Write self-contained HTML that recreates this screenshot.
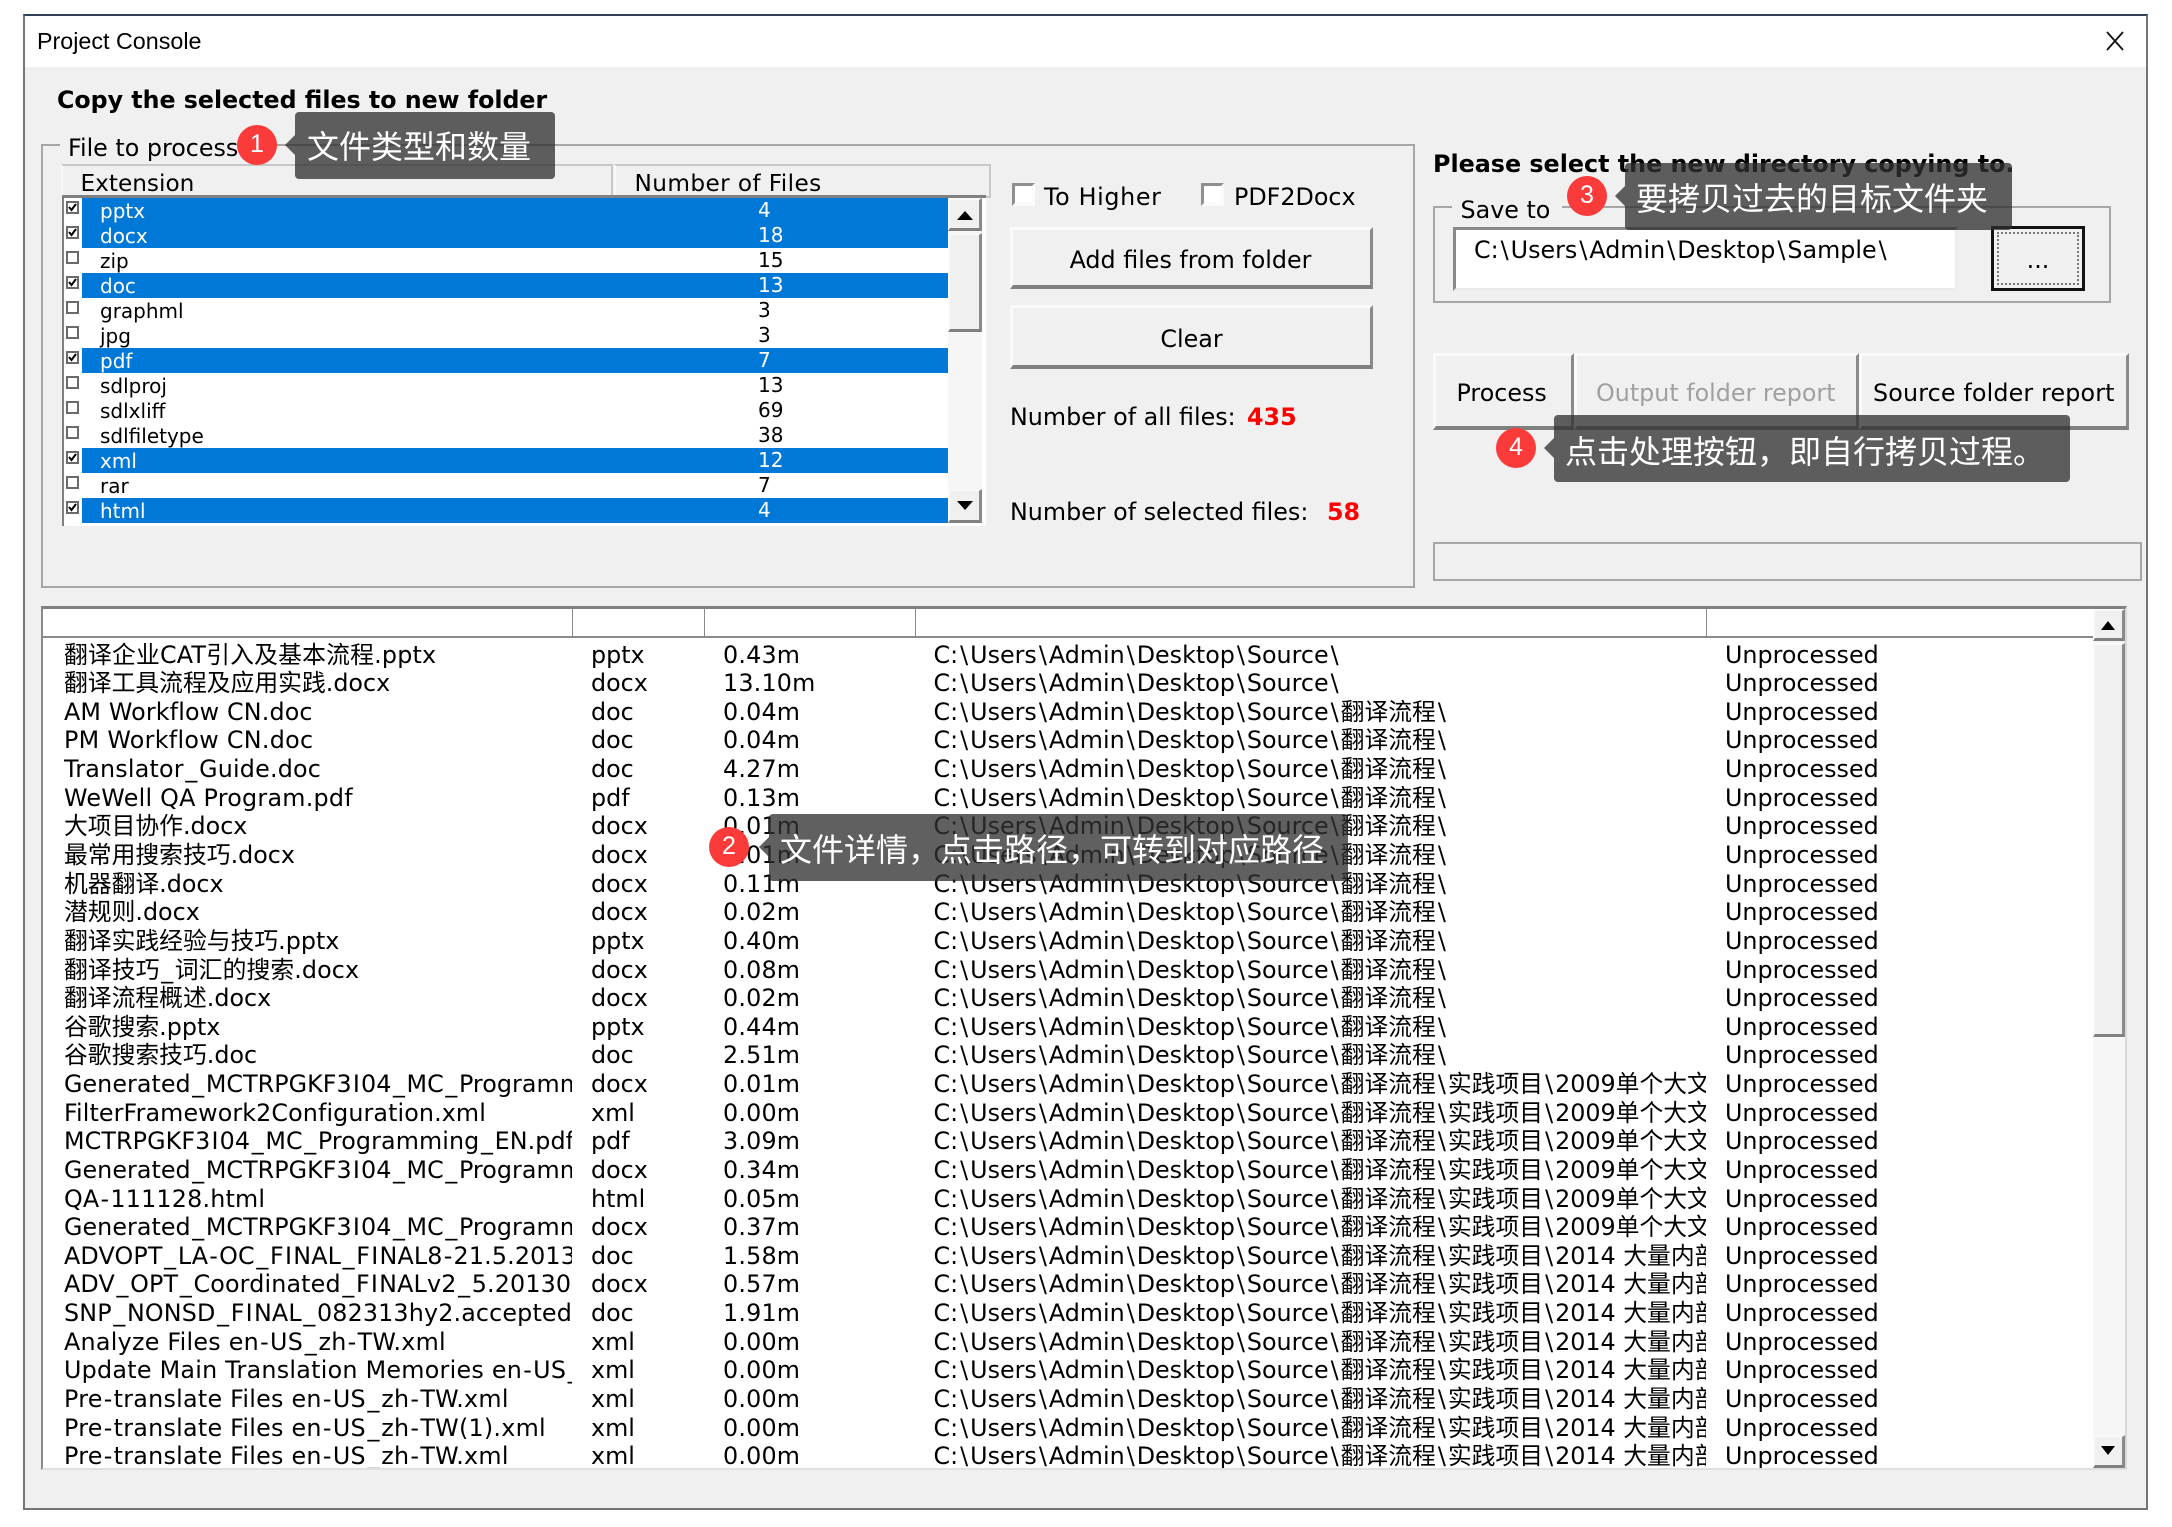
<!DOCTYPE html>
<html>
<head>
<meta charset="utf-8">
<title>Project Console</title>
<style>
html,body{margin:0;padding:0;background:#fff;}
#p{position:relative;width:2172px;height:1527px;overflow:hidden;background:#fff;font-family:"DejaVu Sans","Noto Sans CJK SC",sans-serif;font-size:23.8px;color:#000;}
#p div{position:absolute;box-sizing:border-box;}
s,u{text-decoration:none;}
s{padding:0 2px;}
u{padding:0 1.6px;}
em{font-style:normal;padding:0 1.1px;}
.t{white-space:nowrap;line-height:28px;}
.b{font-weight:bold;}
.btn{background:#f0f0f0;border:3px solid #fafafa;border-right:3px solid #8a8a8a;border-bottom:4px solid #808080;}
.frame{border:2px solid #a6a6a6;}
.leg{background:#f0f0f0;height:24px;}
.hd{background:#f0f0f0;border:2px solid #c8c8c8;border-left:2px solid #f8f8f8;}
.sel{background:#0078d7;left:18px;width:866px;}
.lr{left:0;width:884px;height:25px;font-size:20px;line-height:25px;white-space:nowrap;}
.lr span{position:absolute;top:0;}
.lr .n{left:36px;top:1px;}
.lr .c{left:694px;top:0;}
.w{color:#fff;}
.cb{left:2px;top:3px;width:12.6px;height:12.6px;background:#fff;border:2px solid #6a6a6a;}
.cb svg{position:absolute;left:0;top:0;}
.sb{background:#f0f0f0;border:2px solid #fafafa;border-right:3px solid #8a8a8a;border-bottom:3px solid #808080;}
.ck{background:#fff;border:3px solid #fafafa;border-top:3px solid #8f8f8f;border-left:3px solid #8f8f8f;width:23px;height:23px;}
.r{left:0;width:2092px;height:28.63px;top:calc(2.6px + var(--n)*28.63px);line-height:28.63px;white-space:nowrap;}
.r span{position:absolute;top:0;overflow:hidden;height:28.63px;display:block;}
.r span:nth-child(1){left:64px;width:508px;}
.r span:nth-child(2){left:591px;width:113px;}
.r span:nth-child(3){left:723px;width:190px;letter-spacing:.2px;}
.r span:nth-child(4){left:933.5px;width:772.5px;}
.r span:nth-child(5){left:1725px;width:300px;}
.sep{width:1px;background:#8a8a8a;top:608px;height:29px;}
.dot{width:40px;height:40px;border-radius:50%;background:#fb3a3a;color:#fff;font-family:"Liberation Sans",sans-serif;font-size:25px;line-height:39px;text-align:center;z-index:6;}
.tip{background:rgba(48,48,48,.77);border-radius:4px;z-index:5;color:#fff;font-size:32px;line-height:40px;white-space:nowrap;font-family:"Noto Sans CJK SC","DejaVu Sans",sans-serif;}
.arr{width:0;height:0;border-top:10px solid transparent;border-bottom:10px solid transparent;border-right:10px solid rgba(48,48,48,.77);z-index:5;}
</style>
</head>
<body>
<div id="p">
  <!-- window -->
  <div style="left:23px;top:14px;width:2125px;height:1496px;background:#f0f0f0;border:2px solid #757575;border-top:2px solid #2f3f55;"></div>
  <div style="left:25px;top:16px;width:2121px;height:51px;background:#fff;"></div>
  <div class="t" style="left:37px;top:26.5px;font-family:'Liberation Sans',sans-serif;font-size:23.3px;">Project Console</div>
  <svg style="position:absolute;left:2105px;top:30px" width="20" height="22"><path d="M2 2 L18 20 M18 2 L2 20" stroke="#111" stroke-width="1.8" fill="none"/></svg>

  <div class="t b" style="left:57px;top:85.8px;font-size:23.7px;">Copy the selected files to new folder</div>

  <!-- file group -->
  <div class="frame" style="left:41px;top:144px;width:1374px;height:444px;"></div>
  <div class="leg" style="left:60px;top:134px;width:200px;"></div>
  <div class="t" style="left:68px;top:133.6px;">File to process</div>

  <div class="hd" style="left:61px;top:164px;width:552px;height:34px;"></div>
  <div class="hd" style="left:614px;top:164px;width:377px;height:34px;"></div>
  <div class="t" style="left:80.5px;top:169.5px;font-size:23.2px;">Extension</div>
  <div class="t" style="left:634.5px;top:169.5px;font-size:23.2px;letter-spacing:.4px;">Number of Files</div>

  <div style="left:62px;top:195px;width:924px;height:331px;background:#fff;border-top:3px solid #808080;border-left:2px solid #808080;">
    <div style="left:0;top:0;width:884px;height:325px;overflow:hidden;background:#fff;">
      <div class="sel" style="top:0;height:50px;"></div>
      <div class="sel" style="top:75px;height:25px;"></div>
      <div class="sel" style="top:150px;height:25px;"></div>
      <div class="sel" style="top:300px;height:25px;"></div>
      <div class="sel" style="top:250px;height:25px;"></div>
      <div class="lr" style="top:0"><div class="cb"><svg width="9" height="9"><path d="M1 4 L3.5 7 L8 1" stroke="#000" stroke-width="2" fill="none"/></svg></div><span class="n w">pptx</span><span class="c w">4</span></div>
      <div class="lr" style="top:25px"><div class="cb"><svg width="9" height="9"><path d="M1 4 L3.5 7 L8 1" stroke="#000" stroke-width="2" fill="none"/></svg></div><span class="n w">docx</span><span class="c w">18</span></div>
      <div class="lr" style="top:50px"><div class="cb"></div><span class="n">zip</span><span class="c">15</span></div>
      <div class="lr" style="top:75px"><div class="cb"><svg width="9" height="9"><path d="M1 4 L3.5 7 L8 1" stroke="#000" stroke-width="2" fill="none"/></svg></div><span class="n w">doc</span><span class="c w">13</span></div>
      <div class="lr" style="top:100px"><div class="cb"></div><span class="n">graphml</span><span class="c">3</span></div>
      <div class="lr" style="top:125px"><div class="cb"></div><span class="n">jpg</span><span class="c">3</span></div>
      <div class="lr" style="top:150px"><div class="cb"><svg width="9" height="9"><path d="M1 4 L3.5 7 L8 1" stroke="#000" stroke-width="2" fill="none"/></svg></div><span class="n w">pdf</span><span class="c w">7</span></div>
      <div class="lr" style="top:175px"><div class="cb"></div><span class="n">sdlproj</span><span class="c">13</span></div>
      <div class="lr" style="top:200px"><div class="cb"></div><span class="n">sdlxliff</span><span class="c">69</span></div>
      <div class="lr" style="top:225px"><div class="cb"></div><span class="n">sdlfiletype</span><span class="c">38</span></div>
      <div class="lr" style="top:250px"><div class="cb"><svg width="9" height="9"><path d="M1 4 L3.5 7 L8 1" stroke="#000" stroke-width="2" fill="none"/></svg></div><span class="n w">xml</span><span class="c w">12</span></div>
      <div class="lr" style="top:275px"><div class="cb"></div><span class="n">rar</span><span class="c">7</span></div>
      <div class="lr" style="top:300px"><div class="cb"><svg width="9" height="9"><path d="M1 4 L3.5 7 L8 1" stroke="#000" stroke-width="2" fill="none"/></svg></div><span class="n w">html</span><span class="c w">4</span></div>
    </div>
    <!-- scrollbar -->
    <div style="left:884px;top:0;width:34px;height:325px;background:#f6f6f6;"></div>
    <div class="sb" style="left:884px;top:0;width:34px;height:33px;"></div>
    <svg style="position:absolute;left:892px;top:13px" width="18" height="10"><path d="M9 0 L17 9 L1 9 Z" fill="#000"/></svg>
    <div class="sb" style="left:884px;top:35px;width:34px;height:99px;"></div>
    <div class="sb" style="left:884px;top:291px;width:34px;height:34px;"></div>
    <svg style="position:absolute;left:892px;top:303px" width="18" height="10"><path d="M1 0 L17 0 L9 9 Z" fill="#000"/></svg>
  </div>

  <!-- middle controls -->
  <div class="ck" style="left:1012px;top:183px;"></div>
  <div class="t" style="left:1044px;top:182.8px;letter-spacing:.65px;">To Higher</div>
  <div class="ck" style="left:1201px;top:183px;"></div>
  <div class="t" style="left:1234px;top:182.8px;">PDF2Docx</div>
  <div class="btn" style="left:1010px;top:227px;width:363px;height:62px;"></div>
  <div class="t" style="left:1009px;width:363px;text-align:center;top:245.8px;">Add files from folder</div>
  <div class="btn" style="left:1010px;top:305px;width:363px;height:64px;"></div>
  <div class="t" style="left:1010px;width:363px;text-align:center;top:324.5px;">Clear</div>
  <div class="t" style="left:1010px;top:402.5px;">Number of all files:</div>
  <div class="t b" style="left:1247px;top:402.5px;color:#f00;">435</div>
  <div class="t" style="left:1010px;top:497.8px;">Number of selected files:</div>
  <div class="t b" style="left:1327px;top:497.8px;color:#f00;">58</div>

  <!-- right side -->
  <div class="t b" style="left:1433px;top:150.2px;">Please select the new directory copying to.</div>
  <div class="frame" style="left:1433px;top:206px;width:678px;height:97px;"></div>
  <div class="leg" style="left:1452px;top:198px;width:110px;"></div>
  <div class="t" style="left:1460.5px;top:196.3px;">Save to</div>
  <div style="left:1453px;top:227px;width:505px;height:64px;background:#fff;border:3px solid #ececec;border-top:3px solid #8a8a8a;border-left:3px solid #8a8a8a;"></div>
  <div class="t" style="left:1474px;top:235.8px;">C:<s>\</s>Users<s>\</s>Admin<s>\</s>Desktop<s>\</s>Sample<s>\</s></div>
  <div style="left:1991px;top:226px;width:94px;height:65px;background:#f0f0f0;border:3px solid #111;">
    <div style="left:3px;top:3px;right:3px;bottom:3px;border:2px dotted #777;"></div>
  </div>
  <div class="t" style="left:1991px;width:94px;text-align:center;top:245.8px;">...</div>

  <div class="btn" style="left:1433px;top:353px;width:141px;height:77px;"></div>
  <div class="btn" style="left:1574px;top:353px;width:285px;height:77px;"></div>
  <div class="btn" style="left:1859px;top:353px;width:270px;height:77px;"></div>
  <div class="t" style="left:1456.5px;top:378.9px;">Process</div>
  <div class="t" style="left:1596px;top:378.9px;color:#a0a0a0;">Output folder report</div>
  <div class="t" style="left:1873px;top:378.9px;letter-spacing:.15px;">Source folder report</div>

  <div class="frame" style="left:1433px;top:542px;width:709px;height:39px;"></div>

  <!-- big list -->
  <div style="left:41px;top:606px;width:2086px;height:864px;background:#fff;border-top:3px solid #808080;border-left:2px solid #8a8a8a;border-right:2px solid #d8d8d8;border-bottom:2px solid #e0e0e0;"></div>
  <div style="left:43px;top:636px;width:2050px;height:2px;background:#8a8a8a;"></div>
  <div class="sep" style="left:572px;"></div>
  <div class="sep" style="left:704px;"></div>
  <div class="sep" style="left:915px;"></div>
  <div class="sep" style="left:1706px;"></div>
  <div style="left:0;top:638px;width:2092px;height:830px;overflow:hidden;">
    <div class="r" style="--n:0"><span style="letter-spacing:.2px">翻译企业CAT引入及基本流程.pptx</span><span>pptx</span><span>0.43m</span><span>C:<s>\</s>Users<s>\</s>Admin<s>\</s>Desktop<s>\</s>Source<s>\</s></span><span>Unprocessed</span></div>
    <div class="r" style="--n:1"><span>翻译工具流程及应用实践.docx</span><span>docx</span><span>13.10m</span><span>C:<s>\</s>Users<s>\</s>Admin<s>\</s>Desktop<s>\</s>Source<s>\</s></span><span>Unprocessed</span></div>
    <div class="r" style="--n:2"><span style="letter-spacing:.15px">AM Workflow CN.doc</span><span>doc</span><span>0.04m</span><span>C:<s>\</s>Users<s>\</s>Admin<s>\</s>Desktop<s>\</s>Source<s>\</s>翻译流程<s>\</s></span><span>Unprocessed</span></div>
    <div class="r" style="--n:3"><span style="letter-spacing:.3px">PM Workflow CN.doc</span><span>doc</span><span>0.04m</span><span>C:<s>\</s>Users<s>\</s>Admin<s>\</s>Desktop<s>\</s>Source<s>\</s>翻译流程<s>\</s></span><span>Unprocessed</span></div>
    <div class="r" style="--n:4"><span style="letter-spacing:.2px">Translator<u>_</u>Guide.doc</span><span>doc</span><span>4.27m</span><span>C:<s>\</s>Users<s>\</s>Admin<s>\</s>Desktop<s>\</s>Source<s>\</s>翻译流程<s>\</s></span><span>Unprocessed</span></div>
    <div class="r" style="--n:5"><span style="letter-spacing:.26px">WeWell QA Program.pdf</span><span>pdf</span><span>0.13m</span><span>C:<s>\</s>Users<s>\</s>Admin<s>\</s>Desktop<s>\</s>Source<s>\</s>翻译流程<s>\</s></span><span>Unprocessed</span></div>
    <div class="r" style="--n:6"><span>大项目协作.docx</span><span>docx</span><span>0.01m</span><span>C:<s>\</s>Users<s>\</s>Admin<s>\</s>Desktop<s>\</s>Source<s>\</s>翻译流程<s>\</s></span><span>Unprocessed</span></div>
    <div class="r" style="--n:7"><span>最常用搜索技巧.docx</span><span>docx</span><span>0.01m</span><span>C:<s>\</s>Users<s>\</s>Admin<s>\</s>Desktop<s>\</s>Source<s>\</s>翻译流程<s>\</s></span><span>Unprocessed</span></div>
    <div class="r" style="--n:8"><span>机器翻译.docx</span><span>docx</span><span>0.11m</span><span>C:<s>\</s>Users<s>\</s>Admin<s>\</s>Desktop<s>\</s>Source<s>\</s>翻译流程<s>\</s></span><span>Unprocessed</span></div>
    <div class="r" style="--n:9"><span>潜规则.docx</span><span>docx</span><span>0.02m</span><span>C:<s>\</s>Users<s>\</s>Admin<s>\</s>Desktop<s>\</s>Source<s>\</s>翻译流程<s>\</s></span><span>Unprocessed</span></div>
    <div class="r" style="--n:10"><span>翻译实践经验与技巧.pptx</span><span>pptx</span><span>0.40m</span><span>C:<s>\</s>Users<s>\</s>Admin<s>\</s>Desktop<s>\</s>Source<s>\</s>翻译流程<s>\</s></span><span>Unprocessed</span></div>
    <div class="r" style="--n:11"><span style="letter-spacing:.1px">翻译技巧<u>_</u>词汇的搜索.docx</span><span>docx</span><span>0.08m</span><span>C:<s>\</s>Users<s>\</s>Admin<s>\</s>Desktop<s>\</s>Source<s>\</s>翻译流程<s>\</s></span><span>Unprocessed</span></div>
    <div class="r" style="--n:12"><span>翻译流程概述.docx</span><span>docx</span><span>0.02m</span><span>C:<s>\</s>Users<s>\</s>Admin<s>\</s>Desktop<s>\</s>Source<s>\</s>翻译流程<s>\</s></span><span>Unprocessed</span></div>
    <div class="r" style="--n:13"><span>谷歌搜索.pptx</span><span>pptx</span><span>0.44m</span><span>C:<s>\</s>Users<s>\</s>Admin<s>\</s>Desktop<s>\</s>Source<s>\</s>翻译流程<s>\</s></span><span>Unprocessed</span></div>
    <div class="r" style="--n:14"><span>谷歌搜索技巧.doc</span><span>doc</span><span>2.51m</span><span>C:<s>\</s>Users<s>\</s>Admin<s>\</s>Desktop<s>\</s>Source<s>\</s>翻译流程<s>\</s></span><span>Unprocessed</span></div>
    <div class="r" style="--n:15"><span style="letter-spacing:.05px">Generated<u>_</u>MCTRPGKF3<em>I</em>04<u>_</u>MC<u>_</u>Programming<u>_</u>EN.docx</span><span>docx</span><span>0.01m</span><span>C:<s>\</s>Users<s>\</s>Admin<s>\</s>Desktop<s>\</s>Source<s>\</s>翻译流程<s>\</s>实践项目<s>\</s>2009单个大文件项目</span><span>Unprocessed</span></div>
    <div class="r" style="--n:16"><span style="letter-spacing:.1px">FilterFramework2Configuration.xml</span><span>xml</span><span>0.00m</span><span>C:<s>\</s>Users<s>\</s>Admin<s>\</s>Desktop<s>\</s>Source<s>\</s>翻译流程<s>\</s>实践项目<s>\</s>2009单个大文件项目</span><span>Unprocessed</span></div>
    <div class="r" style="--n:17"><span style="letter-spacing:.1px">MCTRPGKF3<em>I</em>04<u>_</u>MC<u>_</u>Programming<u>_</u>EN.pdf</span><span>pdf</span><span>3.09m</span><span>C:<s>\</s>Users<s>\</s>Admin<s>\</s>Desktop<s>\</s>Source<s>\</s>翻译流程<s>\</s>实践项目<s>\</s>2009单个大文件项目</span><span>Unprocessed</span></div>
    <div class="r" style="--n:18"><span style="letter-spacing:.05px">Generated<u>_</u>MCTRPGKF3<em>I</em>04<u>_</u>MC<u>_</u>Programming<u>_</u>EN.docx</span><span>docx</span><span>0.34m</span><span>C:<s>\</s>Users<s>\</s>Admin<s>\</s>Desktop<s>\</s>Source<s>\</s>翻译流程<s>\</s>实践项目<s>\</s>2009单个大文件项目</span><span>Unprocessed</span></div>
    <div class="r" style="--n:19"><span style="letter-spacing:.2px">QA<em>-</em>111128.html</span><span>html</span><span>0.05m</span><span>C:<s>\</s>Users<s>\</s>Admin<s>\</s>Desktop<s>\</s>Source<s>\</s>翻译流程<s>\</s>实践项目<s>\</s>2009单个大文件项目</span><span>Unprocessed</span></div>
    <div class="r" style="--n:20"><span style="letter-spacing:.05px">Generated<u>_</u>MCTRPGKF3<em>I</em>04<u>_</u>MC<u>_</u>Programming<u>_</u>EN.docx</span><span>docx</span><span>0.37m</span><span>C:<s>\</s>Users<s>\</s>Admin<s>\</s>Desktop<s>\</s>Source<s>\</s>翻译流程<s>\</s>实践项目<s>\</s>2009单个大文件项目</span><span>Unprocessed</span></div>
    <div class="r" style="--n:21"><span style="letter-spacing:.15px">ADVOPT<u>_</u>LA<em>-</em>OC<u>_</u>F<em>I</em>NAL<u>_</u>F<em>I</em>NAL8<em>-</em>21.5.2013</span><span>doc</span><span>1.58m</span><span>C:<s>\</s>Users<s>\</s>Admin<s>\</s>Desktop<s>\</s>Source<s>\</s>翻译流程<s>\</s>实践项目<s>\</s>2014 大量内部项目</span><span>Unprocessed</span></div>
    <div class="r" style="--n:22"><span style="letter-spacing:.15px">ADV<u>_</u>OPT<u>_</u>Coordinated<u>_</u>F<em>I</em>NALv2<u>_</u>5.20130</span><span>docx</span><span>0.57m</span><span>C:<s>\</s>Users<s>\</s>Admin<s>\</s>Desktop<s>\</s>Source<s>\</s>翻译流程<s>\</s>实践项目<s>\</s>2014 大量内部项目</span><span>Unprocessed</span></div>
    <div class="r" style="--n:23"><span style="letter-spacing:.15px">SNP<u>_</u>NONSD<u>_</u>F<em>I</em>NAL<u>_</u>082313hy2.accepted</span><span>doc</span><span>1.91m</span><span>C:<s>\</s>Users<s>\</s>Admin<s>\</s>Desktop<s>\</s>Source<s>\</s>翻译流程<s>\</s>实践项目<s>\</s>2014 大量内部项目</span><span>Unprocessed</span></div>
    <div class="r" style="--n:24"><span style="letter-spacing:.26px">Analyze Files en<em>-</em>US<u>_</u>zh<em>-</em>TW.xml</span><span>xml</span><span>0.00m</span><span>C:<s>\</s>Users<s>\</s>Admin<s>\</s>Desktop<s>\</s>Source<s>\</s>翻译流程<s>\</s>实践项目<s>\</s>2014 大量内部项目</span><span>Unprocessed</span></div>
    <div class="r" style="--n:25"><span style="letter-spacing:.26px">Update Main Translation Memories en<em>-</em>US<u>_</u>zh<em>-</em>TW.xml</span><span>xml</span><span>0.00m</span><span>C:<s>\</s>Users<s>\</s>Admin<s>\</s>Desktop<s>\</s>Source<s>\</s>翻译流程<s>\</s>实践项目<s>\</s>2014 大量内部项目</span><span>Unprocessed</span></div>
    <div class="r" style="--n:26"><span style="letter-spacing:.26px">Pre<em>-</em>translate Files en<em>-</em>US<u>_</u>zh<em>-</em>TW.xml</span><span>xml</span><span>0.00m</span><span>C:<s>\</s>Users<s>\</s>Admin<s>\</s>Desktop<s>\</s>Source<s>\</s>翻译流程<s>\</s>实践项目<s>\</s>2014 大量内部项目</span><span>Unprocessed</span></div>
    <div class="r" style="--n:27"><span style="letter-spacing:.26px">Pre<em>-</em>translate Files en<em>-</em>US<u>_</u>zh<em>-</em>TW(1).xml</span><span>xml</span><span>0.00m</span><span>C:<s>\</s>Users<s>\</s>Admin<s>\</s>Desktop<s>\</s>Source<s>\</s>翻译流程<s>\</s>实践项目<s>\</s>2014 大量内部项目</span><span>Unprocessed</span></div>
    <div class="r" style="--n:28"><span style="letter-spacing:.26px">Pre<em>-</em>translate Files en<em>-</em>US<u>_</u>zh<em>-</em>TW.xml</span><span>xml</span><span>0.00m</span><span>C:<s>\</s>Users<s>\</s>Admin<s>\</s>Desktop<s>\</s>Source<s>\</s>翻译流程<s>\</s>实践项目<s>\</s>2014 大量内部项目</span><span>Unprocessed</span></div>
  </div>
  <!-- big scrollbar -->
  <div style="left:2093px;top:609px;width:32px;height:859px;background:#f6f6f6;"></div>
  <div class="sb" style="left:2093px;top:609px;width:32px;height:32px;"></div>
  <svg style="position:absolute;left:2100px;top:621px" width="16" height="10"><path d="M8 0 L15 9 L1 9 Z" fill="#000"/></svg>
  <div class="sb" style="left:2093px;top:643px;width:32px;height:394px;"></div>
  <div class="sb" style="left:2093px;top:1435px;width:32px;height:33px;"></div>
  <svg style="position:absolute;left:2100px;top:1446px" width="16" height="10"><path d="M1 0 L15 0 L8 9 Z" fill="#000"/></svg>

  <!-- tooltips -->
  <div class="dot" style="left:237px;top:125px;">1</div>
  <div class="arr" style="left:285px;top:135px;"></div>
  <div class="tip" style="left:295px;top:112px;width:260px;height:67px;padding:13px 0 0 12px;">文件类型和数量</div>

  <div class="dot" style="left:709px;top:827px;">2</div>
  <div class="arr" style="left:759px;top:837px;"></div>
  <div class="tip" style="left:769px;top:814px;width:579px;height:67px;padding:14px 0 0 11px;">文件详情，点击路径，可转到对应路径</div>

  <div class="dot" style="left:1567px;top:176px;">3</div>
  <div class="arr" style="left:1615px;top:186px;"></div>
  <div class="tip" style="left:1625px;top:163px;width:387px;height:67px;padding:14px 0 0 11px;">要拷贝过去的目标文件夹</div>

  <div class="dot" style="left:1496px;top:428px;">4</div>
  <div class="arr" style="left:1544px;top:438px;"></div>
  <div class="tip" style="left:1554px;top:415px;width:516px;height:67px;padding:15px 0 0 11px;">点击处理按钮，即自行拷贝过程。</div>
</div>
</body>
</html>
